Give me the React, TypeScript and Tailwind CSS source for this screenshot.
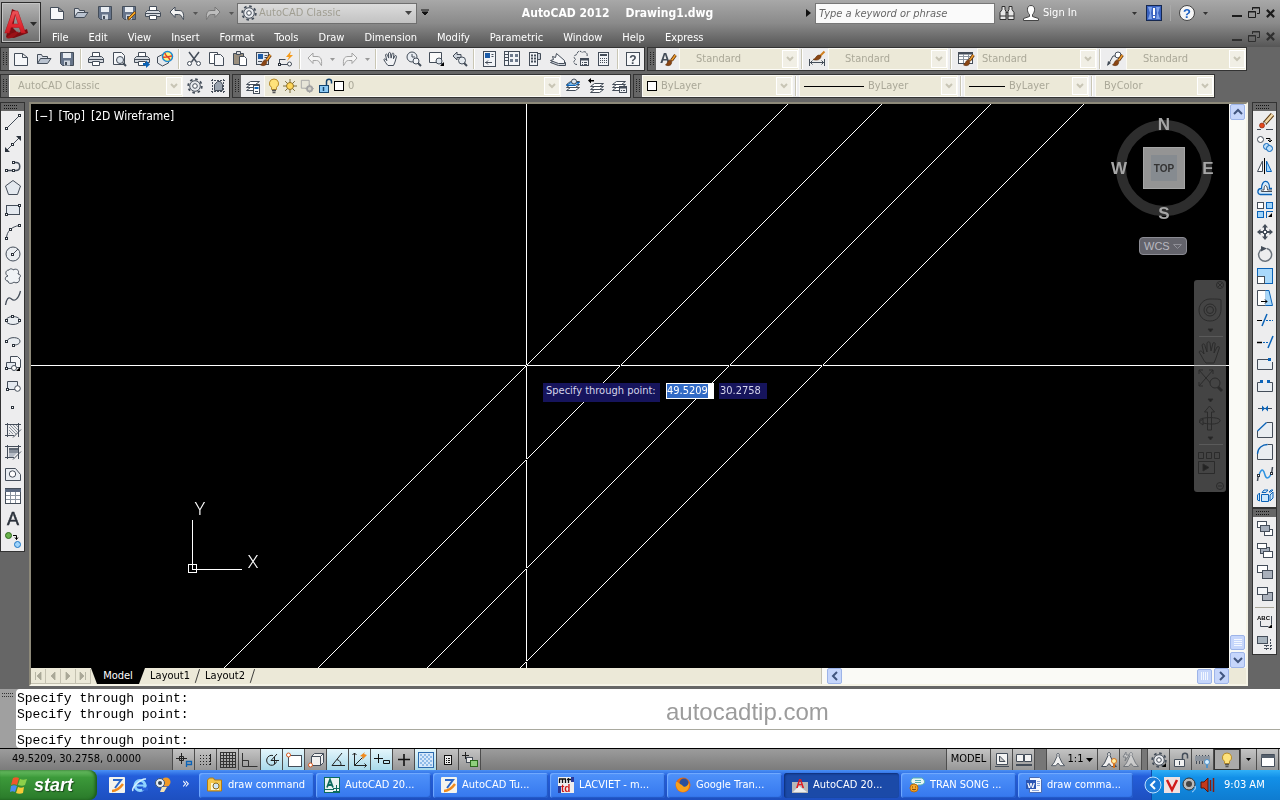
import clsx from 'clsx'
import {ReactNode} from 'react'

const K = '#444d59'
const B = '#0a63b8'
const G = '#a3a3a3'

const page = (
  <path d="M1.5 2.5h8l5 4v8h-13zM9.5 2.5v4h5" fill="#f6f7f9" stroke={K} />
)
const folder = (
  <>
    <path d="M1.500 12.500v-9h4l1 2h5v2" fill="#d9dee6" stroke={K} />
    <path d="M1.500 12.500l3-5h10.500l-3.500 5z" fill="#b9c2cf" stroke={K} />
  </>
)
const floppy = (
  <>
    <path d="M1.500 1.500h13v13h-11l-2-2z" fill="#66748a" stroke={K} />
    <path d="M4 2h8v5h-8z" fill="#e9edf2" />
    <path d="M5 9.500h6v5h-6z" fill="#cfd6df" />
    <path d="M6 11h2v3h-2z" fill={K} />
  </>
)
const printer = (
  <>
    <path d="M4.500 6v-4.500h7v4.500" fill="#fff" stroke={K} />
    <path d="M2.500 5.500h11l2 2v4h-15v-4z" fill="#d5d9df" stroke={K} />
    <path d="M1 8.500h14" stroke={K} />
    <path d="M4.500 10.500h7v4h-7z" fill="#fff" stroke={K} />
  </>
)
const brush = (
  <>
    <path d="M15.500 4l-4 5.500" stroke="#5c2c0a" strokeWidth="3" />
    <path d="M15.500 4l-4 5.500" stroke="#f0a030" strokeWidth="1.500" />
    <path d="M11.500 9.500l-2-.5c-2 1-2 3.500-4 5 3.500 1.500 7 .5 6-4.500z" fill="#8a4513" stroke="#5c2c0a" strokeWidth=".6" />
  </>
)
const gear = (
  <>
    <circle cx="8" cy="8" r="6.800" fill="none" stroke={K} strokeWidth="1.800" strokeDasharray="2.600 2.740" />
    <circle cx="8" cy="8" r="5.300" fill="#e8eaee" stroke={K} />
    <circle cx="8" cy="8" r="2.300" fill="#fff" stroke={K} />
  </>
)
const layers = (
  <path d="M1.500 12.500l4-3h9l-4 3zM1.500 9.500l4-3h9l-4 3zM1.500 6.500l4-3h9l-4 3z" fill="#fff" stroke={K} />
)
const hatchFrame = <path d="M2.500 1v14M13.500 1v14M0 2.500h16M0 13.500h9M8 15.500l8-8" stroke={K} />
const bulb = (
  <>
    <path d="M8 1a4.500 4.500 0 0 0-2.500 8.300v2.200h5v-2.200a4.500 4.500 0 0 0-2.500-8.300z" fill="#ffe27a" stroke="#b58a2a" />
    <path d="M6 12.500h4M6.500 14.500h3" stroke="#555" strokeWidth="1.500" />
  </>
)
const hand = (
  <path
    d="M5 14.500c-2-2-3-4-4.200-6 .8-1 2-.4 3 1.200l-1.300-6c.7-1 1.700-.6 2 .4l1.200 3-.2-5c.8-1 1.700-.8 2 0l.6 5 1-4.500c.8-.8 1.700-.4 1.800.5l-.5 4.700 1.600-3c.8-.6 1.600-.2 1.500.8l-1.500 5.400-1.500 3.500z"
    fill="#f2f3f5"
    stroke={K}
  />
)
const drop = <path d="M15 11v4h-4z" fill="#000" />
const node = (x: number, y: number) => (
  <rect key={`${x}-${y}`} x={x - 0.5} y={y - 0.5} width="2" height="2" fill="#fff" stroke="#2b323b" />
)
const sq = (x: number, y: number, w: number, h: number, fill: string, stroke = K) => (
  <rect x={x + 0.5} y={y + 0.5} width={w} height={h} fill={fill} stroke={stroke} />
)

const icons: Record<string, ReactNode> = {
  'New': page,
  'Open': folder,
  'Save': floppy,
  'Save As': (
    <>
      {floppy}
      <path d="M15 8l-6 6-2 1 .5-2.500 6-6z" fill="#f5a623" stroke="#7a4a10" />
    </>
  ),
  'Plot': printer,
  'Undo': <path d="M1 7l5-5v3.500h4c4 0 5 3 4.500 9-1.500 0-1-5-5-5h-3.500v3z" fill="#f2f2f2" stroke={K} />,
  'Redo': <path d="M15 7l-5-5v3.500h-4c-4 0-5 3-4.500 9 1.500 0 1-5 5-5h3.500v3z" fill="#bdbdbd" stroke="#777" />,
  'Undo Last': <path d="M1 7l5-5v3.500h4c4 0 5 3 4.500 9-1.500 0-1-5-5-5h-3.500v3z" fill="#f4f4f4" stroke={G} />,
  'Redo Last': <path d="M15 7l-5-5v3.500h-4c-4 0-5 3-4.500 9 1.500 0 1-5 5-5h3.500v3z" fill="#f4f4f4" stroke={G} />,
  'Plot Preview': (
    <>
      <path d="M2.500 1.500h8l3 3v9h-11z" fill="#f7f8fa" stroke={K} />
      <circle cx="9" cy="9" r="3.500" fill="#dfe6ee" stroke={K} />
      <path d="M12 12l3 3" stroke={K} strokeWidth="2" />
    </>
  ),
  'Publish': (
    <>
      {printer}
      <path d="M9 12h3v-2.500l4 4-4 3.500v-2.500h-3z" fill={B} />
    </>
  ),
  '3DDWF': (
    <>
      <path d="M.5 6l6-3 5 3v6l-6 3-5-3z" fill="#e5e8ec" stroke={K} />
      <circle cx="10.500" cy="5.500" r="5" fill="#fff27d" stroke="#1d8ad2" strokeWidth="1.500" />
      <path d="M8 2c0 4 4 3 5 7M6 6c3 1 6-1 9-1" stroke="#e2432e" strokeWidth="1.500" />
    </>
  ),
  'Cut': (
    <>
      <path d="M3 1l7.500 10M13 1l-7.500 10" stroke={K} strokeWidth="1.500" />
      <circle cx="3.500" cy="12.500" r="2" fill="#fff" stroke={K} />
      <circle cx="12.500" cy="12.500" r="2" fill="#fff" stroke={K} />
    </>
  ),
  'Copy Clip': (
    <>
      <path d="M.5 1.500h8v11h-8z" fill="#fff" stroke={K} />
      <path d="M5.500 3.500h6l3 3v8h-9z" fill="#f5f6f8" stroke={K} />
    </>
  ),
  'Paste': (
    <>
      <path d="M1.500 2.500h10v11h-10z" fill="#9a8f7e" stroke={K} />
      <path d="M4.500 .5h4v3h-4z" fill="#ddd" stroke={K} />
      <path d="M7.500 5.500h5l2 2v7h-7z" fill="#fff" stroke={K} />
    </>
  ),
  'Match Properties': (
    <>
      {sq(1, 1, 12, 12, '#e4e8ee')}
      <path d="M3 3h5v5h-5z" fill="#1d5ca8" />
      <path d="M9.500 4.500h3M9.500 6.500h3M3 10.500h4" stroke={K} />
      {brush}
    </>
  ),
  'Block Editor': (
    <>
      <path d="M1.500 13.500h9M1.500 8v5M1.500 8.500h6" stroke={K} />
      {node(1, 13)}
      <circle cx="11.500" cy="13" r="2" fill="#fff" stroke={K} />
      <path d="M13 0l-5 6h3l-2 4 6-6h-3z" fill="#f59b1c" />
    </>
  ),
  'Pan': hand,
  'Zoom Realtime': (
    <>
      <circle cx="6" cy="6" r="5" fill="#e9edf2" stroke={K} />
      <path d="M6 3v3h3" stroke={K} />
      <circle cx="10" cy="10" r="3" fill="#f3f5f8" stroke={K} />
      <path d="M12 12l3 3" stroke={K} strokeWidth="2" />
    </>
  ),
  'Zoom Window': (
    <>
      <path d="M.5 1.500h12v10h-12z" fill="#fafafa" stroke={K} />
      <circle cx="10" cy="10" r="3" fill="#e0e7ee" stroke={K} />
      <path d="M12 12l2 2" stroke={K} strokeWidth="2" />
      {drop}
    </>
  ),
  'Zoom Previous': (
    <>
      <path d="M1 5l4-4v2.500h4v3h-4v2.500z" fill="#cfd5dd" stroke={K} />
      <circle cx="10" cy="9.500" r="3.500" fill="#e6ebf0" stroke={K} />
      <path d="M12 12l3 3" stroke={K} strokeWidth="2" />
    </>
  ),
  'Properties': (
    <>
      {sq(2, 0, 12, 15, '#f2f4f7')}
      <path d="M4 2h5v5h-5z" fill="#1d5ca8" />
      <path d="M10.500 3.500h2M10.500 5.500h2M4 11.500h7M7 9.500l-2 2 2 2" stroke={K} />
    </>
  ),
  'DesignCenter': (
    <>
      {sq(0, 0, 15, 14, '#f2f4f7')}
      <path d="M4.500 1v13M1 3.500h3M1 6.500h3M1 9.500h3" stroke={K} />
      <path d="M6 3h3v3h-3zM11 3h3v3h-3zM6 8h3v3h-3zM11 8h3v3h-3z" fill="#6d7a8c" />
    </>
  ),
  'Tool Palettes': (
    <>
      {sq(2, 1, 8, 13, '#f2f4f7')}
      <path d="M10.500 2.500h3v6h-3z" fill="#c8ced7" stroke={K} />
      <path d="M4 4.500h5M4 7.500h5M4 10.500h5" stroke={K} strokeWidth="2" strokeDasharray="2 1" />
    </>
  ),
  'Sheet Set Manager': (
    <>
      <path d="M.5 11.500l8 3h7v-3l-6-4z" fill="#cfd4db" stroke={K} />
      <path d="M.5 9.500l3-1-1-3 3 1 1-4 8 7v3h-6z" fill="#f6f7f9" stroke={K} />
    </>
  ),
  'Markup Set Manager': (
    <>
      <path d="M4 13.500c-4 0-4-4-1-5-3-1-2-5 1-5 0-4 4-4 5-2 3-2 6 0 5 4" stroke={K} strokeDasharray="3 1" />
      {sq(7, 7, 8, 7, '#f0f2f5')}
      <path d="M7 8.500h9" stroke={K} strokeWidth="2" />
      <path d="M9 11.500h1M11 11.500h3M9 13.500h1M11 13.500h3" stroke={K} />
    </>
  ),
  'QuickCalc': (
    <>
      {sq(2, 1, 10, 13, '#f2f4f7')}
      <path d="M4 3h7v2h-7z" fill={K} />
      <path d="M4 7.500h7M4 9.500h7M4 11.500h7" stroke={K} strokeDasharray="1 1" />
    </>
  ),
  'Help': (
    <>
      <rect x="1.500" y="1.500" width="13" height="13" fill="#f7f8fa" stroke={K} />
      <text x="8" y="12.500" textAnchor="middle" fontSize="12" fontWeight="bold" fill={K}>
        ?
      </text>
    </>
  ),
  'Text Style': (
    <>
      <text x="0" y="12" fontSize="14" fontWeight="bold" fill={K}>
        A
      </text>
      {brush}
    </>
  ),
  'Dimension Style': (
    <>
      <path d="M.5 8v7M15.500 8v7M1 11.500h14M3.500 9.500l-2 2 2 2M12.500 9.500l2 2-2 2" stroke={K} />
      <path d="M15.500 .5l-5 5" stroke="#d08020" strokeWidth="2" />
      <path d="M12 5l-2-1c-3 0-3 4-6 4.500 4 1.500 8 0 8-3.500z" fill="#8a4513" stroke="#5c2c0a" strokeWidth=".6" />
    </>
  ),
  'Table Style': (
    <>
      {sq(0, 1, 14, 11, '#fff')}
      <path d="M0 2.500h15" stroke={K} strokeWidth="2" />
      <path d="M1 5.500h14M1 8.500h13M5.500 3v9M10.500 3v9" stroke="#8a939e" />
      {brush}
    </>
  ),
  'Multileader Style': (
    <>
      <path d="M1 14l5-9h3" stroke={K} />
      <path d="M0 15l1-5 3 2z" fill={K} />
      <circle cx="11" cy="4" r="3" fill="#fff" stroke={K} />
      {brush}
    </>
  ),
  'Workspace Settings': gear,
  'My Workspace': (
    <>
      <path d="M1 2.500h15M1 13.500h15M2.500 1v15M13.500 1v15" stroke={K} strokeDasharray="2 1" />
      <path d="M4.500 12.500v-6l3-3h3l2 3v6z" fill="#9aa3ae" stroke={K} />
    </>
  ),
  'Layer Properties': (
    <>
      {layers}
      {sq(8, 7, 6, 8, '#fff')}
      <path d="M9.500 9h4v2h-4z" fill={B} />
      <path d="M10 13.500h3" stroke={K} />
    </>
  ),
  'Make Layer Current': (
    <>
      {layers}
      <path d="M1.500 7.500l4-3h9l-4 3z" fill="#7db9ea" stroke={B} />
      <circle cx="9" cy="3.500" r="2.500" fill="#dde6ee" stroke={K} />
    </>
  ),
  'Layer Previous': (
    <>
      <g transform="translate(1 2)">{layers}</g>
      <path d="M0 2.500l3-2.500v2h3v1.500h-3v2z" fill="#000" />
    </>
  ),
  'Layer States': (
    <>
      {layers}
      {sq(8, 8, 7, 6, '#f0f2f5')}
      <path d="M8 9.500h8" stroke={K} strokeWidth="2" />
      <path d="M10 12.500h1M12 12.500h2" stroke={K} />
    </>
  ),
  'bulb': bulb,
  'sun': (
    <>
      <path d="M8 0v16M0 8h16M2.500 2.500l11 11M13.500 2.500l-11 11" stroke="#6a5a20" />
      <circle cx="8" cy="8" r="4" fill="#ffd75a" stroke="#8a6a1a" />
    </>
  ),
  'freeze': (
    <>
      <path d="M1.500 1.500h9v9h-9z" fill="#e7e5d8" stroke={G} />
      <circle cx="11" cy="11" r="3" fill="#d4d2c8" stroke={G} strokeWidth="2" />
      <path d="M11 6v10M6 11h10" stroke={G} strokeDasharray="2 6" />
    </>
  ),
  'unlock': (
    <>
      <path d="M9.500 7v-3.500c0-3 5-3 5 0v2" stroke="#14456f" strokeWidth="1.500" />
      {sq(2, 7, 9, 7, '#8ccaf5', '#14456f')}
      <path d="M6.500 9v4" stroke="#14456f" strokeWidth="1.500" />
    </>
  ),
  // draw toolbar
  'Line': <><path d="M1.500 14.500l13-13" stroke={K} />{node(1, 14)}{node(14, 1)}</>,
  'Construction Line': (
    <>
      <path d="M1 15l14-14" stroke={K} />
      <path d="M0 16v-5l5 5zM16 0v5l-5-5z" fill="#2b323b" />
      {node(7, 8)}
    </>
  ),
  'Polyline': <><path d="M1 12.500h10c5 0 5-8 0-8h-2" stroke={K} strokeWidth="1.500" />{node(1, 12)}{node(8, 12)}{node(8, 4)}</>,
  'Polygon': <path d="M8 .500l7.500 5.500-3 8.500h-9l-3-8.500z" fill="#e4e9ef" stroke={K} />,
  'Rectangle': <><rect x="1.500" y="3.500" width="13" height="9" fill="#e4e9ef" stroke={K} />{node(1, 12)}{node(14, 3)}</>,
  'Arc': <><path d="M1.500 14.500c0-7 5-12 13-13" stroke={K} />{node(1, 14)}{node(5, 5)}{node(14, 1)}</>,
  'Circle': <><circle cx="8" cy="8" r="7" fill="#e9edf1" stroke={K} /><path d="M8 8l5-5" stroke={K} />{node(7, 8)}</>,
  'Revision Cloud': (
    <path
      d="M3 8c-3-1-3-6 1-6 1-2 4-1 4 0 3-2 7 0 5 4 3 0 3 3 1 4 2 4-3 6-5 4-2 2-6 2-6-1-4 0-3-5 0-5z"
      fill="#f0f3f6"
      stroke={K}
    />
  ),
  'Spline': <path d="M.500 15c1-6 3-9 6-6s7 0 9-8" stroke={K} strokeWidth="1.300" />,
  'Ellipse': <><ellipse cx="8" cy="8.500" rx="7" ry="4" fill="#e9edf1" stroke={K} />{node(1, 8)}{node(14, 8)}{node(7, 4)}</>,
  'Ellipse Arc': <><path d="M2 7c2-5 13-4 13 0 0 3-3 4-6 4" fill="#e9edf1" stroke={K} />{node(1, 7)}{node(8, 11)}</>,
  'Insert Block': (
    <>
      <path d="M5.500 .500h7l3 3v8h-10z" fill="#f5f6f8" stroke={K} />
      <path d="M1.500 12.500v-6h9v6z" fill="#e4e9ef" stroke={K} />
      {node(1, 12)}
      <circle cx="9" cy="12" r="2.500" fill="#fff" stroke={K} />
      {drop}
    </>
  ),
  'Make Block': (
    <>
      <path d="M2.500 11.500v-8h10v8z" fill="#e4e9ef" stroke={K} />
      {node(2, 11)}
      <circle cx="12.500" cy="10.500" r="2.800" fill="#fff" stroke={K} />
    </>
  ),
  'Point': node(7, 7),
  'Hatch': <><path d="M4 5l7 7M4 8l4 4M5 3l7 7M8 3l5 5M4 11l1 1M11 3l2 2" stroke="#8b949e" />{hatchFrame}</>,
  'Gradient': (
    <>
      <path d="M4 4h9v2h-9z" fill="#5f6874" />
      <path d="M4 6h9v3h-9z" fill="#868e99" />
      <path d="M4 9h8l-4 4h-4z" fill="#b6bcc5" />
      {hatchFrame}
    </>
  ),
  'Region': (
    <>
      <path d="M.500 2.500h10l5 6v6h-15z" fill="#e9edf1" stroke={K} />
      <circle cx="7.500" cy="8" r="3.200" fill="#fff" stroke={K} />
    </>
  ),
  'Table': (
    <>
      {sq(0, 0, 15, 15, '#fff')}
      <path d="M0 1h16v3h-16z" fill="#5c6a80" />
      <path d="M1 7.500h14M1 11.500h14M5.500 4v11M10.500 4v11" stroke="#8a939e" />
    </>
  ),
  'Multiline Text': (
    <text x="8" y="14.500" textAnchor="middle" fontSize="18" fill="#2b323b" stroke="#2b323b" strokeWidth=".5">
      A
    </text>
  ),
  'Add Selected': (
    <>
      <circle cx="3.500" cy="3.500" r="3" fill="#69b34c" stroke="#2f6a1c" />
      <path d="M8 3.500h3.500v4M10 5.500l1.500 2 1.500-2" stroke="#000" />
      <circle cx="12.500" cy="12.500" r="3" fill="#9fd4fb" stroke="#1d76c4" />
    </>
  ),
  // modify toolbar
  'Erase': (
    <>
      <path d="M0 15.500h4M9 15.500h7" stroke={K} />
      <path d="M15.500 .5l-8 9" stroke="#5c3a10" strokeWidth="4.500" />
      <path d="M15.500 .5l-7 8" stroke="#f3d9a8" strokeWidth="2.500" />
      <path d="M8 8l1 2-2 2-2-2z" fill="#dfe3e8" />
      <circle cx="5" cy="11.500" r="2.500" fill="#e2481c" stroke="#7a1e08" strokeWidth=".6" />
    </>
  ),
  'Copy': (
    <>
      <circle cx="3.500" cy="3.500" r="3" fill="#fff" stroke={K} />
      <path d="M9 2.500h4v3M11 4l2 2 2-2" stroke="#000" />
      <circle cx="9.500" cy="10.500" r="3" fill="#bfe0fa" stroke={B} />
      <circle cx="12.500" cy="12.500" r="3" fill="#bfe0fa" stroke={B} />
    </>
  ),
  'Mirror': (
    <>
      <path d="M7.500 0v16" stroke="#000" />
      <path d="M5.500 3v10.500h-5z" fill="#fff" stroke={K} />
      <path d="M9.500 3v10.500h5z" fill="#9fd4fb" stroke={B} />
    </>
  ),
  'Offset': (
    <>
      <path d="M15 14.500h-12c-3-1-3-6 1.500-6 0-10 8.500-9 8 0h2.500" fill="#d6ebfb" stroke={B} strokeWidth="1.300" />
      <path d="M15 11.500h-10c-2 0-1-2 2-1.500 0-7 3.500-5 3.500 0h4.500" fill="#fff" stroke={K} />
    </>
  ),
  'Array': (
    <>
      {sq(0, 0, 6, 6, '#fff')}
      {sq(9, 0, 6, 6, '#9fd4fb', B)}
      {sq(0, 9, 6, 6, '#9fd4fb', B)}
      <path d="M9.500 16v-6.500h6.500" stroke={B} />
      {drop}
    </>
  ),
  'Move': (
    <>
      <path d="M8 2v4M8 10v4M2 8h4M10 8h4" stroke={K} strokeWidth="2" />
      <path d="M8 0l3 3.500h-6zM8 16l3-3.500h-6zM0 8l3.500-3v6zM16 8l-3.500-3v6z" fill={K} />
      <rect x="6.500" y="6.500" width="3" height="3" fill="#fff" stroke={K} />
    </>
  ),
  'Rotate': (
    <>
      <path d="M10 2.500a6.500 6.500 0 1 1-5 .5" stroke="#6b737d" strokeWidth="1.500" />
      <path d="M4 0l6 2.500-6 3z" fill={K} />
    </>
  ),
  'Scale': <>{sq(0, 0, 15, 15, '#a9d8fa', B)}{sq(0, 8, 7, 7, '#fff')}</>,
  'Stretch': (
    <>
      <path d="M8 .500h4l3.500 15h-7.500z" fill="#a9d8fa" stroke={B} />
      <path d="M.500 .500h8v15h-8z" fill="#fff" />
      <path d="M8.500 .500h-8v15h8" stroke={K} />
      <path d="M4 11.500h6M8 9.500l2 2-2 2" stroke="#000" />
    </>
  ),
  'Trim': <><path d="M0 8.500h5" stroke="#000" /><path d="M5 14l5-12" stroke={B} strokeWidth="1.500" /><path d="M9 8.500h7" stroke={B} strokeDasharray="2 1" /></>,
  'Extend': <><path d="M0 8.500h5" stroke="#000" strokeWidth="1.500" /><path d="M11 14l5-12" stroke={B} strokeWidth="1.500" /><path d="M6 8.500h6" stroke={B} strokeDasharray="2 1" /></>,
  'Break at Point': <><path d="M15.500 6v7.500h-15v-10h13" fill="#e9edf1" stroke={K} /><path d="M11 2h3v3h-3z" fill={B} /></>,
  'Break': <><path d="M4 4.500h-3.500v9h15v-9h-3.500" fill="#e9edf1" stroke={K} /><path d="M3 2h3v3h-3zM10 2h3v3h-3z" fill={B} /></>,
  'Join': <><path d="M1 8.500h14" stroke={K} /><path d="M5 5.500l3 3-3 3zM11 5.500l-3 3 3 3z" fill={B} /></>,
  'Chamfer': <><path d="M.500 8v7.500h15v-15h-7z" fill="#e9edf1" /><path d="M.500 9v6.500h15v-15h-6" stroke={K} /><path d="M.500 9l9-8.500" stroke={B} strokeWidth="1.300" /></>,
  'Fillet': <><path d="M.500 15.500v-5c0-6 5-10 10-10h5v15z" fill="#e9edf1" /><path d="M.500 10v5.500h15v-15h-5" stroke={K} /><path d="M.500 10c0-6 5-9.500 10-9.500" stroke={B} strokeWidth="1.300" /></>,
  'Blend Curves': (
    <>
      <path d="M.500 15l1-7M14.500 8l1-7" stroke={K} strokeWidth="1.500" />
      <path d="M2 9c3-9 5-4 6 0s4 4 6-1" stroke="#2e92e0" strokeWidth="1.500" />
      {node(1, 9)}
      {node(14, 7)}
    </>
  ),
  'Explode': (
    <>
      <path d="M5 4.500l2-2.500h4l-2 2.500zM12 4l2-2h2l-2 2zM13 7l3-3v6l-3 3zM.500 7l2-2v8l-2-1zM4.500 6.500h7v7h-7z" fill="#cbe6fb" stroke={B} />
    </>
  ),
  // draw order toolbar
  'Bring to Front': <>{sq(0, 1, 9, 6, '#fff')}{sq(7, 9, 8, 6, '#fff')}{sq(3, 5, 9, 6, '#a4adba')}</>,
  'Send to Back': <>{sq(3, 5, 9, 6, '#a4adba')}{sq(0, 1, 9, 5, '#fff')}{sq(6, 9, 9, 6, '#fff')}</>,
  'Bring Above Objects': <>{sq(0, 1, 10, 7, '#fff')}{sq(5, 6, 10, 8, '#a9b0bb')}</>,
  'Send Under Objects': <>{sq(5, 6, 10, 8, '#a9b0bb')}{sq(0, 1, 10, 7, '#f3f5f8')}</>,
  'Text to Front': (
    <>
      <path d="M3.500 8v5.500h8M14.500 3v8" stroke={K} />
      <text x="0" y="7" fontSize="6" fontWeight="bold" fill="#000">
        ABC
      </text>
      {drop}
    </>
  ),
  'Hatch to Back': (
    <>
      <path d="M7 10.500h9M7 13.500h9M9.500 7v9M13.500 4v12" stroke={K} strokeDasharray="2 1" />
      {sq(0, 1, 10, 7, '#a9b5bf')}
    </>
  ),
}

const Icon = ({name, className = 'size-4'}: {name: string; className?: string}) => (
  <svg
    viewBox="0 0 16 16"
    fill="none"
    className={clsx('shrink-0 overflow-visible', className)}
    fontFamily="Liberation Sans, sans-serif"
    aria-hidden="true"
  >
    {icons[name]}
  </svg>
)

const IconButton = ({name, className = 'w-[23px]'}: {name: string; className?: string}) => (
  <button
    type="button"
    title={name}
    className={clsx('flex h-[22px] shrink-0 items-center justify-center hover:bg-white', className)}
  >
    <Icon name={name} />
  </button>
)

const DownArrow = ({className, label}: {className?: string; label: string}) => (
  <button type="button" aria-label={label} className={clsx('flex w-3 shrink-0 justify-center', className)}>
    <svg viewBox="0 0 5 3" className="h-[3px] w-[5px]" fill="currentColor">
      <path d="M0 0h5l-2.500 3z" />
    </svg>
  </button>
)

const Separator = () => <span className="mx-[2px] h-5 w-[2px] shrink-0 border-r border-white bg-[#c9c6b4]" />

const Grip = () => (
  <svg className="mx-[2px] h-4 w-1 shrink-0" viewBox="0 0 4 16" aria-hidden="true">
    <path d="M.5 1v14M3.500 1v14" stroke="#222" strokeDasharray="1 1" />
  </svg>
)

const Bar = ({children}: {children: ReactNode}) => (
  <div className="flex h-6 shrink-0 items-center border border-[#333] bg-[#ededee]">
    <span className="flex h-full items-center bg-[#666]">
      <Grip />
    </span>
    {children}
  </div>
)

type ComboProps = {
  label: string
  value: string
  className?: string
  indent?: string
  children?: ReactNode
}

const Combo = ({label, value, className, indent = 'pl-1', children}: ComboProps) => (
  <div className={clsx('flex h-[22px] shrink-0 items-center border border-[#fbfaf4] bg-[#ece9d8]', className)}>
    {children}
    <select
      aria-label={label}
      className={clsx('min-w-0 flex-1 appearance-none bg-transparent text-[11px] text-[#aaa898] outline-none', indent)}
    >
      <option>{value}</option>
    </select>
    <span className="pointer-events-none flex h-[18px] w-4 items-center justify-center border border-white bg-[#f1efe5]">
      <svg viewBox="0 0 8 6" className="h-[6px] w-2" fill="none">
        <path d="M1 1l3 3 3-3" stroke="#c8c5b5" strokeWidth="2" />
      </svg>
    </span>
  </div>
)

const quickAccess = ['New', 'Open', 'Save', 'Save As', 'Plot']
const menus = [
  'File',
  'Edit',
  'View',
  'Insert',
  'Format',
  'Tools',
  'Draw',
  'Dimension',
  'Modify',
  'Parametric',
  'Window',
  'Help',
  'Express',
]

const WindowControls = ({dim}: {dim?: boolean}) => (
  <div className={clsx('flex items-center gap-1 pr-1', dim ? 'text-[#2f2f2f]' : 'text-[#1c1c1c]')}>
    <button type="button" aria-label="Minimize" className="flex h-4 w-3 items-center justify-center">
      <svg viewBox="0 0 10 10" className="size-[10px]">
        <path d="M0 8h10" stroke="currentColor" strokeWidth="2" />
      </svg>
    </button>
    <button type="button" aria-label="Restore" className="ml-px flex h-4 w-3 items-center justify-center">
      <svg viewBox="0 0 12 12" className="size-3" fill="none" stroke="currentColor">
        <path d="M4.500 3V.5h7v6H9M4 1h8" />
        <path d="M.5 4.500h7v6h-7zM0 5h8" />
      </svg>
    </button>
    <button type="button" aria-label="Close" className="flex h-4 w-3 items-center justify-center">
      <svg viewBox="0 0 10 10" className="size-[9px]">
        <path d="M1 1l8 8M9 1l-8 8" stroke="currentColor" strokeWidth="2.500" />
      </svg>
    </button>
  </div>
)

const Header = () => (
  <header className="flex h-[47px] shrink-0 bg-linear-to-b from-[#a8a8a8] via-[#8a8a8a] to-[#565656]">
    <button
      type="button"
      aria-label="Application menu"
      className="mt-[2px] ml-px flex h-[41px] w-10 shrink-0 items-center border border-[#2c2c2c] bg-linear-to-b from-[#b4b4b4] to-[#6e6e6e] shadow-[inset_0_0_0_1px_#c4c4c4]"
    >
      <svg viewBox="0 0 38 38" className="size-[38px]" aria-hidden="true">
        <defs>
          <linearGradient id="logo" x1="0" y1="0" x2="0" y2="1">
            <stop offset="0" stopColor="#f0686c" />
            <stop offset=".6" stopColor="#e0262f" />
            <stop offset="1" stopColor="#b3151d" />
          </linearGradient>
        </defs>
        <path d="M10 5l4 2-3 17 5 5 9-4 1 4-14 5-8-1z" fill="#7d0d12" />
        <text
          x="2"
          y="29"
          fontFamily="Liberation Sans, sans-serif"
          fontSize="31"
          fontWeight="bold"
          fill="url(#logo)"
          stroke="#b3151d"
          strokeWidth=".5"
        >
          A
        </text>
        <path d="M4 34c5-5 10-7 13-6l-4 4c-3 2-6 3-9 2z" fill="#9a1117" />
        <path d="M28 18h7l-3.500 4z" fill="#2b2b2b" />
      </svg>
    </button>
    <div className="flex min-w-0 flex-1 flex-col">
      <div className="flex h-[26px] shrink-0 items-center pl-1">
        {quickAccess.map((name) => (
          <IconButton key={name} name={name} className="w-6" />
        ))}
        <IconButton name="Undo" className="w-6" />
        <DownArrow label="Undo list" className="text-[#555]" />
        <IconButton name="Redo" className="w-6" />
        <DownArrow label="Redo list" className="text-[#555]" />
        <div className="flex h-[21px] w-[180px] shrink-0 items-center border border-[#6f6f6f] bg-linear-to-b from-[#dcdcdc] to-[#c2c2c2] pl-[3px]">
          <Icon name="Workspace Settings" />
          <select
            aria-label="Workspace"
            className="min-w-0 flex-1 appearance-none bg-transparent pl-[2px] text-[11px] text-[#a09e92] outline-none"
          >
            <option>AutoCAD Classic</option>
          </select>
          <svg viewBox="0 0 7 4" className="mr-1 h-1 w-[7px]">
            <path d="M0 0h7l-3.500 4z" fill="#444" />
          </svg>
        </div>
        <button type="button" aria-label="Customize toolbar" className="ml-1 shrink-0">
          <svg viewBox="0 0 8 8" className="size-2">
            <path d="M0 1h8M1 3h6l-3 3z" stroke="#111" fill="#111" />
          </svg>
        </button>
        <h1 className="flex flex-1 justify-center gap-4 text-[12px] font-bold whitespace-nowrap text-white">
          <span>AutoCAD 2012</span>
          <span>Drawing1.dwg</span>
        </h1>
        <svg viewBox="0 0 5 8" className="mr-1 h-2 w-[5px]">
          <path d="M0 0l5 4-5 4z" fill="#111" />
        </svg>
        <input
          aria-label="Search"
          placeholder="Type a keyword or phrase"
          className="h-[21px] w-[180px] border border-[#777] bg-[#fafafa] pl-[3px] text-[11px] italic outline-none placeholder:text-[#666]"
        />
        <button type="button" aria-label="Find" className="ml-[3px] flex w-[18px] justify-center">
          <svg viewBox="0 0 16 16" className="size-4" fill="#e6e6e6" stroke="#2e2e2e">
            <path d="M3 1.500h3v3l1 2v8h-6v-7l2-3zM10 1.500h3v3l2 3v7h-6v-8l1-2zM7 7.500h2M1 11h6M9 11h6" />
          </svg>
        </button>
        <button type="button" className="ml-[7px] flex items-center gap-1 text-[11px] whitespace-nowrap text-white">
          <svg viewBox="0 0 16 16" className="size-4" fill="#fff" stroke="#444">
            <path d="M8 .5c5 0 4 7 1.500 9v2l6 2v2h-15v-2l6-2v-2c-2.500-2-3.500-9 1.500-9z" />
          </svg>
          Sign In
        </button>
        <DownArrow label="Sign in options" className="ml-[51px] text-[#333]" />
        <button type="button" aria-label="Exchange" className="ml-[6px]">
          <svg viewBox="0 0 16 16" className="size-4">
            <rect x=".5" y=".5" width="15" height="15" fill="#3a62c0" stroke="#16284f" />
            <path d="M2 2h4l-1 6 1 6h-4l2-6zM14 2h-4l1 6-1 6h4l-2-6z" fill="#7fa2e8" />
            <path d="M7 3h2v7h-2zM7 11h2v2h-2z" fill="#fff" />
          </svg>
        </button>
        <span className="mx-2 h-4 w-px bg-[#a9a9a9]" />
        <button type="button" aria-label="Help">
          <svg viewBox="0 0 16 16" className="size-4 overflow-visible">
            <circle cx="8" cy="8" r="7.500" fill="#f6f6f6" stroke="#444" />
            <text x="8" y="12.500" textAnchor="middle" fontFamily="Liberation Sans, sans-serif" fontSize="13" fontWeight="bold" fill="#1f62c4">
              ?
            </text>
          </svg>
        </button>
        <DownArrow label="Help options" className="mr-5 ml-1 text-[#333]" />
        <WindowControls />
      </div>
      <div className="flex h-[21px] items-center justify-between">
        <nav className="flex gap-5 pt-[3px] pl-[11px] text-[11px] text-white">
          {menus.map((menu) => (
            <button key={menu} type="button">
              {menu}
            </button>
          ))}
        </nav>
        <WindowControls dim />
      </div>
    </div>
  </header>
)

const standardTools = [
  ['New', 'Open', 'Save'],
  ['Plot', 'Plot Preview', 'Publish', '3DDWF'],
  ['Cut', 'Copy Clip', 'Paste', 'Match Properties', 'Block Editor'],
  ['Undo Last', 'Redo Last'],
  ['Pan', 'Zoom Realtime', 'Zoom Window', 'Zoom Previous'],
  ['Properties', 'DesignCenter', 'Tool Palettes', 'Sheet Set Manager', 'Markup Set Manager', 'QuickCalc'],
  ['Help'],
]

const styleTools = [
  {name: 'Text Style', indent: 'pl-4'},
  {name: 'Dimension Style', indent: 'pl-4'},
  {name: 'Table Style', indent: 'pl-1'},
  {name: 'Multileader Style', indent: 'pl-4'},
]

const Toolbars = () => (
  <div className="flex shrink-0 flex-col gap-[3px] overflow-hidden pb-1">
    <div className="flex gap-[2px]">
      <Bar>
        {standardTools.map((group, i) => (
          <div key={group[0]} className="flex items-center">
            {i > 0 && <Separator />}
            {group.map((name) => (
              <div key={name} className="flex items-center">
                <IconButton name={name} />
                {name.endsWith('Last') && <DownArrow label={`${name} list`} className="text-[#999]" />}
              </div>
            ))}
          </div>
        ))}
      </Bar>
      <Bar>
        {styleTools.map(({name, indent}, i) => (
          <div key={name} className="flex items-center">
            {i > 0 && <Separator />}
            <IconButton name={name} />
            <Combo label={name} value="Standard" indent={indent} className="w-[120px]" />
          </div>
        ))}
      </Bar>
    </div>
    <div className="flex gap-[2px]">
      <Bar>
        <Combo label="Workspaces" value="AutoCAD Classic" indent="pl-2" className="w-[174px]" />
        <IconButton name="Workspace Settings" />
        <IconButton name="My Workspace" />
      </Bar>
      <Bar>
        <IconButton name="Layer Properties" />
        <Combo label="Layer" value="0" className="w-[297px]">
          <span className="flex items-center gap-px pl-px">
            <Icon name="bulb" />
            <Icon name="sun" className="size-[14px]" />
            <Icon name="freeze" className="ml-[2px] size-[14px]" />
            <Icon name="unlock" className="ml-[2px] size-4" />
            <span className="size-[10px] border border-black bg-white" />
          </span>
        </Combo>
        <IconButton name="Make Layer Current" />
        <IconButton name="Layer Previous" />
        <IconButton name="Layer States" />
      </Bar>
      <Bar>
        <Combo label="Color" value="ByLayer" className="w-[151px]">
          <span className="ml-1 size-[10px] border border-black bg-white" />
        </Combo>
        <Separator />
        <Combo label="Linetype" value="ByLayer" className="w-[159px]">
          <span className="ml-1 h-px w-[60px] bg-black" />
        </Combo>
        <Separator />
        <Combo label="Lineweight" value="ByLayer" className="w-[125px]">
          <span className="ml-1 h-px w-9 bg-black" />
        </Combo>
        <Separator />
        <Combo label="Plot style" value="ByColor" indent="pl-2" className="w-[119px]" />
      </Bar>
    </div>
  </div>
)

const drawTools = [
  'Line',
  'Construction Line',
  'Polyline',
  'Polygon',
  'Rectangle',
  'Arc',
  'Circle',
  'Revision Cloud',
  'Spline',
  'Ellipse',
  'Ellipse Arc',
  'Insert Block',
  'Make Block',
  'Point',
  'Hatch',
  'Gradient',
  'Region',
  'Table',
  'Multiline Text',
  'Add Selected',
]

const modifyTools = [
  'Erase',
  'Copy',
  'Mirror',
  'Offset',
  'Array',
  'Move',
  'Rotate',
  'Scale',
  'Stretch',
  'Trim',
  'Extend',
  'Break at Point',
  'Break',
  'Join',
  'Chamfer',
  'Fillet',
  'Blend Curves',
  'Explode',
]

const orderTools = ['Bring to Front', 'Send to Back', 'Bring Above Objects', 'Send Under Objects']
const annotationOrderTools = ['Text to Front', 'Hatch to Back']

const Dock = ({tools, more = []}: {tools: string[]; more?: string[]}) => (
  <div className="flex w-[25px] shrink-0 flex-col border border-[#333] bg-[#ededee]">
    <div className="flex h-2 items-center bg-[#666] pl-[3px]">
      <svg viewBox="0 0 14 4" className="h-1 w-[14px]">
        <path d="M0 .5h14M0 3.500h14" stroke="#111" strokeDasharray="1 1" />
      </svg>
    </div>
    {tools.map((name) => (
      <IconButton key={name} name={name} />
    ))}
    {more.length > 0 && <hr className="mx-[2px] my-[2px] border-[#aaa79a]" />}
    {more.map((name) => (
      <IconButton key={name} name={name} />
    ))}
  </div>
)

const ViewCube = () => (
  <svg
    viewBox="0 0 110 110"
    className="absolute top-[9px] right-[10px] size-[110px]"
    fontFamily="Liberation Sans, sans-serif"
    fontWeight="bold"
    textAnchor="middle"
  >
    <circle cx="55" cy="55" r="43" fill="none" stroke="#2d2d2d" strokeWidth="10" />
    <rect x="34.500" y="34.500" width="41" height="41" fill="#949494" stroke="#a6a6a6" />
    <rect x="42" y="42" width="26" height="26" fill="#868b90" />
    <g fontSize="17" fill="#a6a6a6">
      <text x="55" y="17">N</text>
      <text x="99" y="61">E</text>
      <text x="55" y="106">S</text>
      <text x="10" y="61">W</text>
    </g>
    <text x="55" y="59" fontSize="10" fill="#333">
      TOP
    </text>
  </svg>
)

const NavBar = () => (
  <svg
    viewBox="0 0 32 212"
    className="absolute top-[176px] right-[3px] h-[212px] w-8"
    fill="none"
    stroke="#2b2b2b"
    role="img"
    aria-label="Navigation bar"
  >
    <rect width="32" height="212" rx="3" fill="#444" stroke="none" />
    <path d="M0 85.500h32" stroke="#bdbdbd" />
    <circle cx="26" cy="5" r="3.500" />
    <path d="M24 3l4 4M28 3l-4 4" />
    <path d="M16 19c6 0 11 0 11 1v9c0 7-4 12-11 12s-11-5-11-11 5-11 11-11z" />
    <circle cx="16" cy="30" r="6" />
    <circle cx="16" cy="30" r="3.500" />
    <path d="M14 49h5l-2.500 3zM14 119h5l-2.500 3zM14 157h5l-2.500 3z" fill="#232323" />
    <path d="M5 56.500h24M5 164.500h24" stroke="#5a5a5a" />
    <path d="M12 83c-3-3-4-7-7-11 1-2 3-1 5 2l-2-9c1-2 3-1 3 1l2 6v-9c1-2 3-1 3 0l1 8 2-8c1-1 3 0 2 2l-1 8 3-6c2-1 3 0 2 2l-3 9-2 5z" />
    <path d="M5 90l14 16M19 90l-14 16M5 94v-4h4M15 90h4v4M5 102v4h4" />
    <circle cx="21" cy="103" r="5" fill="#444" />
    <path d="M24 107l4 4" strokeWidth="3" />
    <path d="M13.500 150v-18h-3l5-6 5 6h-3v18zM6 141c-4-4 22-5 20 0-1 3-8 4-17 2M9 139v6l-4-3z" />
    <path d="M4.500 172.500h5v6h-5zM12.500 172.500h5v6h-5zM20.500 172.500h5v6h-5zM4.500 181.500h16v12h-16z" />
    <path d="M9 184v7l6-3.500z" fill="#232323" />
    <circle cx="26" cy="206" r="3.500" />
    <path d="M24 206h4" />
  </svg>
)

// xlines at 45 degrees, given by where each meets the top edge
const xlines = [757, 851, 960, 1053]

const Viewport = () => (
  <div className="relative min-w-0 flex-1 overflow-hidden bg-black">
    <svg className="absolute inset-0 size-full bg-black" fill="none" stroke="#fff" shapeRendering="crispEdges">
      {xlines.map((x) => (
        <line key={x} x1={x} y1="0" x2={x - 2000} y2="2000" />
      ))}
      <g className="mix-blend-difference">
        <line x1="495.500" y1="0" x2="495.500" y2="100%" />
        <line x1="0" y1="261.500" x2="100%" y2="261.500" />
      </g>
      <path d="M161.500 416v49h49M157.500 460.500h8v8h-8z" />
      <g fontFamily="Roboto, sans-serif" fontWeight="300" fontSize="18" fill="#fff" stroke="none" textAnchor="middle">
        <text x="169" y="411">Y</text>
        <text x="222" y="464">X</text>
      </g>
    </svg>
    <p className="absolute top-[4px] left-1 flex gap-[6px] text-[12px] leading-4 text-white">
      <span>[−]</span>
      <span>[Top]</span>
      <span>[2D Wireframe]</span>
    </p>
    <ViewCube />
    <button
      type="button"
      className="absolute top-[133px] right-[42px] flex h-[18px] w-12 items-center justify-between rounded-[4px] border border-[#8c8c94] bg-[#63636b] px-1 font-['Liberation_Sans'] text-[11px] text-[#b9b9c0]"
    >
      WCS
      <svg viewBox="0 0 9 5" className="h-[5px] w-[9px]" fill="none">
        <path d="M.5 .5h8l-4 4z" stroke="#8f8f97" />
      </svg>
    </button>
    <NavBar />
    <div className="absolute top-[279px] left-[512px] flex items-start gap-[6px] text-[11px] text-[#d4d4ea]">
      <label htmlFor="dyn-x" className="h-[19px] w-[117px] bg-[#16145c] pl-[3px] leading-4 whitespace-nowrap">
        Specify through point:
      </label>
      <span className="flex h-4 w-12 bg-white p-px">
        <input id="dyn-x" defaultValue="49.5209" className="h-[14px] w-[41px] bg-[#316ac5] text-white outline-none" />
      </span>
      <input
        aria-label="Y coordinate"
        defaultValue="30.2758"
        className="-ml-px h-4 w-12 bg-[#16145c] pl-px outline-none"
      />
    </div>
  </div>
)

const ScrollButton = ({d, label, className}: {d: string; label: string; className?: string}) => (
  <button
    type="button"
    aria-label={label}
    className={clsx(
      'flex h-4 w-[15px] shrink-0 items-center justify-center rounded-[2px] border border-[#9db4e8] bg-[#c6d6fb]',
      className
    )}
  >
    <svg viewBox="0 0 10 10" className="size-[10px]" fill="none">
      <path d={d} stroke="#41557e" strokeWidth="2" />
    </svg>
  </button>
)

const ScrollThumb = ({vertical}: {vertical?: boolean}) => (
  <span className="flex size-[15px] shrink-0 items-center justify-center rounded-[2px] border border-[#9db4e8] bg-[#c6d6fb]">
    <svg viewBox="0 0 8 8" className={clsx('size-2', vertical && 'rotate-90')}>
      <path d="M.5 0v8M2.500 0v8M4.500 0v8M6.500 0v8" stroke="#f3f7ff" />
    </svg>
  </span>
)

const tabArrows = [
  {label: 'First tab', d: 'M2.500 1v8M8 1v8l-4-4z'},
  {label: 'Previous tab', d: 'M7 1v8l-4-4z'},
  {label: 'Next tab', d: 'M3 1v8l4-4z'},
  {label: 'Last tab', d: 'M2 1v8l4-4zM7.500 1v8'},
]

const LayoutTabs = () => (
  <div className="flex h-4 shrink-0 items-center bg-[#ece9d8] text-[11px]">
    {tabArrows.map(({label, d}) => (
      <button
        key={label}
        type="button"
        aria-label={label}
        className="flex h-[15px] w-[15px] shrink-0 items-center justify-center border-r border-b border-[#c4c1b0]"
      >
        <svg viewBox="0 0 10 10" className="size-[10px]">
          <path d={d} fill="#aaa898" stroke="#aaa898" strokeWidth=".8" />
        </svg>
      </button>
    ))}
    <div className="flex flex-1 items-stretch self-stretch">
      <button
        type="button"
        className="w-[54px] bg-black text-white [clip-path:polygon(0_0,100%_0,calc(100%-6px)_100%,6px_100%)]"
      >
        Model
      </button>
      {['Layout1', 'Layout2'].map((tab) => (
        <button key={tab} type="button" className="flex w-[55px] items-center justify-end gap-1">
          {tab}
          <svg viewBox="0 0 7 16" className="h-4 w-[6px] shrink-0">
            <path d="M6.500 0l-5 16" stroke="#222" />
          </svg>
        </button>
      ))}
    </div>
    <div className="flex w-[408px] shrink-0 items-center border-l border-[#c4c1b0] bg-[#fafaf6] pl-[5px]">
      <ScrollButton label="Scroll left" d="M7 1l-4 4 4 4" />
      <span className="flex-1" />
      <ScrollThumb />
      <ScrollButton label="Scroll right" d="M3 1l4 4-4 4" className="ml-[2px]" />
    </div>
    <span className="w-[17px] shrink-0" />
  </div>
)

const DrawingWindow = () => (
  <main className="flex min-w-0 flex-1 flex-col border-2 border-t-[#8d8979] border-r-[#f5f3e6] border-b-[#f5f3e6] border-l-[#8d8979]">
    <div className="flex min-h-0 flex-1">
      <Viewport />
      <div className="flex w-[17px] shrink-0 flex-col items-center gap-[2px] bg-[#fafaf6]">
        <ScrollButton label="Scroll up" d="M1 7l4-4 4 4" />
        <span className="flex-1" />
        <ScrollThumb vertical />
        <ScrollButton label="Scroll down" d="M1 3l4 4 4-4" />
      </div>
    </div>
    <LayoutTabs />
  </main>
)

const CommandLine = () => (
  <section className="flex h-[59px] shrink-0 bg-[#a0a0a0]">
    <div className="w-4 shrink-0 pt-1 pl-[2px]">
      <svg viewBox="0 0 12 4" className="h-1 w-3">
        <path d="M0 .5h12M0 3.500h12" stroke="#333" strokeDasharray="1 1" />
      </svg>
    </div>
    <div className="relative flex flex-1 flex-col rounded-l-[4px] bg-white font-['Liberation_Mono'] text-[13px] leading-4 text-black">
      <div className="flex-1 border-b border-[#a9a99f] pt-[2px] pl-px">
        <p>Specify through point:</p>
        <p>Specify through point:</p>
      </div>
      <label className="flex h-[18px] items-center pt-[3px] pl-px">
        <span>Specify through point:</span>
        <input aria-label="Command" className="ml-2 flex-1 outline-none" />
      </label>
      <span className="absolute top-[7px] left-[650px] font-['Liberation_Sans'] text-[24px] leading-8 text-[#9c9c9c]">
        autocadtip.com
      </span>
    </div>
  </section>
)

const statusToggles: {name: string; on?: boolean; icon: ReactNode}[] = [
  {
    name: 'Infer Constraints',
    icon: (
      <>
        <path d="M5.500 1v11M0 6.500h11M3.500 4.500h4v4h-4z" stroke="#222" />
        <path d="M10.500 15v-5.500h5v3h-5" stroke="#0a63b8" strokeWidth="1.300" />
      </>
    ),
  },
  {
    name: 'Snap Mode',
    icon: (
      <>
        <path d="M2 3.500h10M2 6.500h10M2 9.500h10M2 12.500h10" stroke="#222" strokeDasharray="1 2" />
        <path d="M12.500 2v8M12.500 11v2" stroke="#222" />
      </>
    ),
  },
  {
    name: 'Grid Display',
    icon: <path d="M0 .5h16M0 3.500h16M0 6.500h16M0 9.500h16M0 12.500h16M0 15.500h16M.5 0v16M3.500 0v16M6.500 0v16M9.500 0v16M12.500 0v16M15.500 0v16" stroke="#333" />,
  },
  {name: 'Ortho Mode', icon: <path d="M.5 1v13.500h15M.5 8.500h6v6" stroke="#333" />},
  {
    name: 'Polar Tracking',
    on: true,
    icon: <path d="M15 8.500h-8l6-6.500M12.500 9.500a5 5 0 1 1-3.500-6M10.500 5v7" stroke="#222" />,
  },
  {
    name: 'Object Snap',
    on: true,
    icon: (
      <>
        <rect x="2.500" y="3.500" width="13" height="11" fill="#fff" stroke={K} />
        <circle cx="2.500" cy="3" r="2" fill="#fff" stroke="#d9571c" />
      </>
    ),
  },
  {
    name: '3D Object Snap',
    icon: (
      <>
        <path d="M3.500 4.500l3-3h9v9l-3 3h-9zM3.500 4.500h9v9M12.500 4.500l3-3" fill="#f0f0f0" stroke={K} />
        <circle cx="2.500" cy="13" r="2" fill="#fff" stroke="#d9571c" />
      </>
    ),
  },
  {name: 'Object Snap Tracking', on: true, icon: <path d="M12 1l-10 12.500h13M7 7.500c3 1 4 3 4 6" stroke="#222" />},
  {
    name: 'Dynamic UCS',
    on: true,
    icon: (
      <>
        <path d="M2.500 1v12.500h12M2.500 13.500l8-8M.500 3l2-2 2 2M12.500 11.500l2 2-2 2" stroke="#222" />
        <path d="M13 0l-5 4 3 1-1 3 5-5-3-1z" fill="#f08a1c" />
      </>
    ),
  },
  {name: 'Dynamic Input', on: true, icon: <path d="M4.500 2v9M0 6.500h9M9.500 8.500h6v3h-6z" stroke="#111" />},
  {name: 'Lineweight', icon: <path d="M8 2v12M2 7.500h12" stroke="#111" strokeWidth="1.600" />},
  {
    name: 'Transparency',
    on: true,
    icon: (
      <>
        <rect x=".5" y=".5" width="15" height="15" fill="#d6e8fa" stroke="#2c6cb0" />
        <path d="M2 3h12M2 7h12M2 11h12" stroke="#8fbbe8" strokeWidth="2" strokeDasharray="2 2" />
        <path d="M4 5h11M4 9h11M4 13h11" stroke="#8fbbe8" strokeWidth="2" strokeDasharray="2 2" />
      </>
    ),
  },
  {
    name: 'Quick Properties',
    icon: (
      <>
        <rect x="4.500" y="3.500" width="7" height="9" fill="#eee" stroke="#111" />
        <path d="M6 6.500h1M8 6.500h2M6 8.500h1M8 8.500h2M6 10.500h1M8 10.500h2" stroke="#111" />
      </>
    ),
  },
  {
    name: 'Selection Cycling',
    icon: (
      <>
        <path d="M3.500 0v7M0 3.500h7" stroke="#222" />
        <rect x="4.500" y="5.500" width="6" height="5" fill="#e8e8e8" stroke={K} />
        <rect x="8.500" y="8.500" width="7" height="6" fill="#8fd07c" stroke="#2b6a1c" />
      </>
    ),
  },
]

const compass = <path d="M8 .5c1 0 2 1 1 3l3.500 7.500 3 3.500h-5l-2.500-3-2.500 3h-5l3-3.500 3.500-7.500c-1-2 0-3 1-3z" fill="#f0f0f0" stroke={K} />

const StatusButton = ({
  name,
  children,
  className,
  width = 'w-[22px]',
}: {
  name: string
  children: ReactNode
  className?: string
  width?: string
}) => (
  <button
    type="button"
    title={name}
    className={clsx('flex h-[21px] shrink-0 items-center justify-center border-r border-[#4d4d4d]', width, className)}
  >
    <svg viewBox="0 0 16 16" className="size-4 shrink-0 overflow-visible" fill="none">
      {children}
    </svg>
  </button>
)

const StatusBar = () => (
  <footer className="flex h-[22px] shrink-0 items-center border-t border-black bg-linear-to-b from-[#9c9c9c] to-[#7b7b7b] text-[11px] text-black">
    <span className="w-[172px] shrink-0 pl-3 whitespace-nowrap">49.5209, 30.2758, 0.0000</span>
    <div className="flex border-l border-[#4d4d4d]">
      {statusToggles.map(({name, on, icon}) => (
        <StatusButton
          key={name}
          name={name}
          className={on ? 'bg-linear-to-b from-[#e4f6fc] to-[#a8d9ea]' : 'bg-linear-to-b from-[#c4c4c4] to-[#979797]'}
        >
          {icon}
        </StatusButton>
      ))}
    </div>
    <span className="flex-1" />
    <div className="flex items-center border-l border-[#4d4d4d] bg-linear-to-b from-[#c4c4c4] to-[#979797] pr-px">
      <button type="button" className="h-[21px] w-11 border-r border-[#4d4d4d]">
        MODEL
      </button>
      <StatusButton name="Quick View Layouts">
        <path d="M2.500 1.500h11v11h-11zM1 14.500h14" fill="#f4f4f4" stroke={K} />
        <path d="M5.500 4v5.500h5.500z" fill="#ccc" stroke={K} />
      </StatusButton>
      <StatusButton name="Quick View Drawings">
        <path d="M.500 2.500h7v7h-7zM8.500 2.500h7v7h-7z" fill="#f4f4f4" stroke={K} />
        <path d="M0 13h16" stroke={K} strokeWidth="2" />
      </StatusButton>
      <span className="h-[21px] w-3 border-r border-[#4d4d4d] bg-[#777]" />
      <button type="button" className="flex h-[21px] w-[51px] items-center justify-center gap-[3px] border-r border-[#4d4d4d]">
        <svg viewBox="0 0 16 16" className="size-[14px]">
          {compass}
        </svg>
        1:1
        <svg viewBox="0 0 7 4" className="h-1 w-[7px]">
          <path d="M0 0h7l-3.500 4z" />
        </svg>
      </button>
      <StatusButton name="Annotation Visibility">
        {compass}
        <circle cx="13" cy="9" r="2.500" fill="#fff0a0" stroke="#d9741c" />
        <path d="M13 12v4" stroke="#d9741c" strokeWidth="2" />
      </StatusButton>
      <StatusButton name="Auto Scale">
        <g opacity=".5">
          {compass}
          <path d="M3 0l-3 5h3l-1 4 4-6h-3z" fill="#eee" stroke={K} />
        </g>
      </StatusButton>
      <span className="h-[21px] w-[6px] border-r border-[#4d4d4d] bg-[#777]" />
      <StatusButton name="Workspace Switching">
        {gear}
        {drop}
      </StatusButton>
      <StatusButton name="Toolbar Lock">
        <path d="M9.500 7v-3.500c0-3 5-3 5 0v3" stroke={K} strokeWidth="1.500" />
        <path d="M1.500 7.500h10v7h-10zM6.500 9v4" fill="#f0f0f0" stroke={K} />
      </StatusButton>
      <StatusButton name="Hardware Acceleration">
        <path d="M1.500 3v9M4.500 3v9M7.500 3v9M10.500 3v6M13.500 3v4" stroke={K} />
        <path d="M0 4h15v5h-15z" fill="#8c949e" />
        <circle cx="12" cy="10" r="2.500" fill="#d8efff" stroke="#4d91c8" />
        <path d="M12 13v3" stroke="#4d91c8" strokeWidth="2" />
      </StatusButton>
      <StatusButton name="Isolate Objects" width="w-[27px]" className="bg-[#aaa] shadow-[inset_0_0_0_1px_#333]">
        {bulb}
      </StatusButton>
      <DownArrow label="Status bar menu" className="h-[21px] w-4 items-center border-r border-[#4d4d4d]" />
      <StatusButton name="Clean Screen">
        <path d="M1.500 2.500h13v12h-13z" fill="#fff" stroke={K} />
        <path d="M1 3h14v3h-14z" fill="#56606c" />
      </StatusButton>
    </div>
  </footer>
)

const note = (
  <>
    <rect x="0" y="0" width="16" height="16" rx="1" fill="#f4f4ee" />
    <path d="M4 3h8l-6 8" stroke="#2a66c8" strokeWidth="2" />
    <path d="M3 14c5 0 8-3 11-7" stroke="#f08a1c" strokeWidth="2.500" />
  </>
)

const tasks: {title: string; active?: boolean; icon: ReactNode}[] = [
  {
    title: 'draw command',
    icon: (
      <>
        <path d="M.500 3l2-2h4l1 2h7v11h-14z" fill="#f5c74c" stroke="#b07a14" />
        <path d="M4 6h8v7h-8z" fill="#fff6d0" />
        <circle cx="9" cy="9" r="3" fill="#cfe6fa" stroke="#8a6a1a" />
      </>
    ),
  },
  {
    title: 'AutoCAD 20...',
    icon: (
      <>
        <rect x=".5" y=".5" width="15" height="15" fill="#e9f4f1" stroke="#0c6b5c" />
        <path d="M3 10.500l3-8 3 8M4 8h4" stroke="#0c6b5c" strokeWidth="1.800" />
        <path d="M1 12.500h9M12.500 8v7M9 11.500h6M9 14.500h6" stroke="#0c6b5c" />
      </>
    ),
  },
  {title: 'AutoCAD Tu...', icon: note},
  {
    title: 'LACVIET - m...',
    icon: (
      <>
        <rect width="16" height="16" fill="#eee" />
        <path d="M1.500 6v-4M4.500 6v-4M7.500 6v-4M1 2h7M10.500 1v5M9 2.500h4" stroke="#111" strokeWidth="1.300" />
        <text x="3" y="14.500" fontSize="10" fontWeight="bold" fill="#d01818">
          td
        </text>
        <path d="M0 9h3v7h-3zM13 0h3v5h-3z" fill="#2a3a9a" />
      </>
    ),
  },
  {
    title: 'Google Tran...',
    icon: (
      <>
        <circle cx="8" cy="8" r="7.500" fill="#e66a12" />
        <circle cx="9" cy="6" r="4.500" fill="#2a4f9c" />
        <path d="M1 5c3 0 3 2 6 3 2 3 5 2 7-2 1 5-2 9-6 9s-8-4-7-10z" fill="#f7a11c" />
      </>
    ),
  },
  {
    title: 'AutoCAD 20...',
    active: true,
    icon: (
      <>
        <rect y="5" width="16" height="11" fill="#b9b9b9" />
        <path d="M1 15l6-6 8 6z" fill="#eee" />
        <text x="8" y="11" textAnchor="middle" fontSize="12" fontWeight="bold" fill="#e01c24">
          A
        </text>
      </>
    ),
  },
  {
    title: 'TRAN SONG ...',
    icon: (
      <>
        <path d="M4 1h9c4 3 3 6-1 7h-3l-3 2v-3c-5 0-5-4-2-6z" fill="#e8f6f4" stroke="#56b0b0" />
        <path d="M6 3.500h6M6 5.500h6" stroke="#56b0b0" />
        <circle cx="5" cy="11" r="4" fill="#f8a828" stroke="#b86c10" />
        <path d="M3 10h1M6 10h1M3 12c1 1 3 1 4 0" stroke="#6a3a08" />
      </>
    ),
  },
  {
    title: 'draw comma...',
    icon: (
      <>
        <path d="M3.500 .5h10l2 2v13h-12z" fill="#f4f8ff" stroke="#4a6ab0" />
        <path d="M11 4.500h3M11 6.500h3M11 8.500h3M6 13.500h7" stroke="#8aa6dc" />
        <path d="M0 3h10v9h-10z" fill="#2a56b4" />
        <text x="5" y="10.500" textAnchor="middle" fontSize="8" fontWeight="bold" fill="#fff">
          W
        </text>
      </>
    ),
  },
]

const TaskIcon = ({children}: {children: ReactNode}) => (
  <svg
    viewBox="0 0 16 16"
    className="size-4 shrink-0 overflow-visible"
    fill="none"
    fontFamily="Liberation Sans, sans-serif"
  >
    {children}
  </svg>
)

const Taskbar = () => (
  <div className="flex h-[30px] shrink-0 items-center bg-linear-to-b from-[#4a90f5] via-[#245edb] via-20% to-[#1d4fc0] text-[11px] text-white">
    <button
      type="button"
      className="flex h-full w-[97px] shrink-0 items-center gap-1 rounded-r-[8px] bg-linear-to-b from-[#6cc066] via-[#3c9a3a] via-25% to-[#2a7a2a] pl-[10px] text-[18px] font-bold italic shadow-[inset_-2px_0_3px_#1c5a1c] [text-shadow:1px_1px_1px_#1a4a1a]"
    >
      <svg viewBox="0 0 20 18" className="h-[18px] w-5">
        <path d="M3 2c2-1 4-1 6 0l-2 7c-2-1-4-1-6 0z" fill="#f0562a" />
        <path d="M10 3c2 1 4 1 7 0l-2 6c-2 1-4 1-7 0z" fill="#8cd04a" />
        <path d="M1 10c2-1 4-1 6 0l-2 6c-2-1-3-1-5 0z" fill="#4a8cf0" />
        <path d="M8 11c2 1 4 1 6 0l-1 6c-2 1-5 1-7 0z" fill="#f8ca38" />
      </svg>
      <span className="font-['Liberation_Sans']">start</span>
    </button>
    <div className="flex w-[102px] shrink-0 items-center gap-[7px] pl-3">
      <button type="button" aria-label="Notes">
        <TaskIcon>{note}</TaskIcon>
      </button>
      <button type="button" aria-label="Internet Explorer">
        <TaskIcon>
          <circle cx="8" cy="8.500" r="5" stroke="#8fd4ff" strokeWidth="3" />
          <path d="M10 10.500h6v3h-6z" fill="#2a62dc" />
          <path d="M4 8.500h10.500" stroke="#8fd4ff" strokeWidth="2" />
          <path d="M1 14c-2-3 8-13 13-12" stroke="#d8f2ff" strokeWidth="1.500" />
        </TaskIcon>
      </button>
      <button type="button" aria-label="Media Player">
        <TaskIcon>
          <circle cx="11" cy="5" r="4.500" fill="#f09a28" />
          <circle cx="5" cy="6" r="4.500" fill="#e6eef6" stroke="#456" />
          <circle cx="5" cy="6" r="2" fill="#345" />
          <path d="M7 10h5l-3 5h-4z" fill="#f5e2b0" />
        </TaskIcon>
      </button>
      <button type="button" aria-label="More shortcuts" className="self-start pl-1 text-[14px] leading-3">
        »
      </button>
    </div>
    <div className="flex min-w-0 flex-1 gap-[2px]">
      {tasks.map(({title, active, icon}, i) => (
        <button
          key={i}
          type="button"
          className={clsx(
            'flex h-[25px] w-[115px] items-center gap-[5px] overflow-hidden rounded-[3px] pl-2 whitespace-nowrap',
            active
              ? 'bg-[#1b4aa8] shadow-[inset_1px_1px_2px_#0d2f78]'
              : 'bg-linear-to-b from-[#4f92fa] to-[#3577ee] shadow-[inset_1px_1px_1px_#74acff,inset_-1px_-1px_1px_#2257c4]'
          )}
        >
          <TaskIcon>{icon}</TaskIcon>
          {title}
        </button>
      ))}
    </div>
    <div className="flex h-full w-[129px] shrink-0 items-center gap-[2px] border-l border-[#0d4aa8] bg-linear-to-b from-[#2fb0f8] via-[#1290e8] via-25% to-[#0f7cd0]">
      <button type="button" aria-label="Show hidden icons" className="-ml-2">
        <svg viewBox="0 0 18 18" className="size-[18px]" fill="none">
          <circle cx="9" cy="9" r="8" fill="#1c7ad8" stroke="#bfe0ff" />
          <path d="M11 5l-4 4 4 4" stroke="#fff" strokeWidth="2" />
        </svg>
      </button>
      <TaskIcon>
        <rect width="16" height="16" fill="#f0e2e2" />
        <path d="M3 3l5 10 5-10" stroke="#d01c1c" strokeWidth="2.500" />
      </TaskIcon>
      <TaskIcon>
        <circle cx="7" cy="7" r="6" fill="#b9b9b9" stroke="#333" />
        <circle cx="7" cy="7" r="3" fill="#444" />
        <path d="M13 9c1 3-1 5-3 6" stroke="#cfe6ff" />
      </TaskIcon>
      <TaskIcon>
        <path d="M1 5h3l4-4v14l-4-4h-3z" fill="#c23a1c" stroke="#5c1408" />
        <path d="M10.500 3v11M13.500 1v14" stroke="#8a1c0c" strokeWidth="1.500" />
      </TaskIcon>
      <time className="ml-[6px] whitespace-nowrap">9:03 AM</time>
    </div>
  </div>
)

export default function App() {
  return (
    <div className="flex h-screen min-h-[760px] flex-col overflow-hidden bg-[#666] font-['DejaVu_Sans_Condensed','DejaVu_Sans',sans-serif]">
      <Header />
      <Toolbars />
      <div className="flex min-h-0 flex-1 items-stretch gap-1 pr-[3px] pb-[3px]">
        <div className="flex flex-col">
          <Dock tools={drawTools} />
        </div>
        <DrawingWindow />
        <div className="flex flex-col">
          <Dock tools={modifyTools} />
          <Dock tools={orderTools} more={annotationOrderTools} />
        </div>
      </div>
      <CommandLine />
      <StatusBar />
      <Taskbar />
    </div>
  )
}
